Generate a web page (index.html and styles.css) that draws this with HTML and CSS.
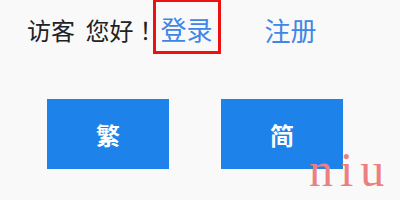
FILE: index.html
```html
<!DOCTYPE html>
<html lang="zh-CN">
<head>
<meta charset="utf-8">
<link rel="stylesheet" href="styles.css">
</head>
<body>
<div class="page">
  <div class="top">
    <span class="greet">访客 您好<span class="excl">！</span></span>
    <a class="login">登录</a>
    <a class="reg">注册</a>
  </div>
  <div class="btns">
    <div class="btn">繁</div>
    <div class="btn">简</div>
  </div>
  <div class="mark">niu</div>
</div>
</body>
</html>
```
FILE: styles.css
```css
html, body {
  margin: 0;
  padding: 0;
  background: #f9f9f9;
}
.page {
  position: relative;
  width: 400px;
  height: 200px;
  overflow: hidden;
  font-family: "Noto Sans CJK SC", "Noto Sans", sans-serif;
}
.top {
  display: flex;
  align-items: flex-start;
  padding-left: 27px;
  height: 55px;
}
.greet {
  flex: none;
  white-space: nowrap;
  font-size: 24px;
  line-height: 26px;
  word-spacing: 5px;
  color: #222;
  margin-top: 17px;
}
.excl {
  font-feature-settings: "palt" 1;
  margin-left: 6px;
  margin-right: 2px;
}
.login {
  flex: none;
  box-sizing: border-box;
  width: 68px;
  height: 55px;
  border: 3px solid #ee1111;
  margin-top: -1px;
  padding: 14px 0 0 4px;
  font-size: 26px;
  line-height: 26px;
  color: #3f86e6;
}
.reg {
  flex: none;
  margin-left: 43px;
  margin-top: 17px;
  font-size: 26px;
  line-height: 26px;
  color: #3f86e6;
}
.btns {
  display: flex;
  gap: 52px;
  padding-left: 47px;
  margin-top: 44px;
}
.btn {
  width: 122px;
  height: 70px;
  background: #1d82ea;
  color: #fff;
  font-size: 24px;
  font-weight: bold;
  display: flex;
  align-items: center;
  justify-content: center;
}
.mark {
  position: absolute;
  left: 309px;
  top: 142px;
  font-family: "Liberation Serif", serif;
  font-size: 48px;
  line-height: 56px;
  letter-spacing: 7px;
  color: #ec8080;
}
```
